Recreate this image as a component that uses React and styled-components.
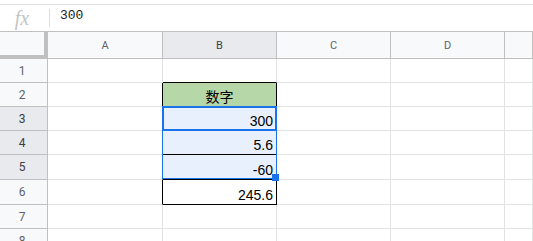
import React from 'react';
import styled, { createGlobalStyle } from 'styled-components';

const Global = createGlobalStyle`
  html, body { margin: 0; padding: 0; background: #fff; overflow: hidden; }
  * { box-sizing: border-box; }
`;

const Page = styled.div`
  width: 533px;
  height: 241px;
  overflow: hidden;
  display: flex;
  flex-direction: column;
  background: #fff;
`;

const FormulaBar = styled.div`
  margin-top: 4px;
  height: 27px;
  border-top: 1px solid #e1e1e1;
  display: flex;
  align-items: center;
  flex: none;
`;

const Fx = styled.span`
  width: 44px;
  text-align: center;
  font-family: "Liberation Serif", serif;
  font-style: italic;
  font-size: 20px;
  color: #c4c4c4;
  line-height: 20px;
  margin-top: -1px;
`;

const Divider = styled.span`
  width: 1px;
  height: 18px;
  margin-left: 5px;
  background: #dadce0;
`;

const FormulaValue = styled.span`
  margin-left: 10px;
  align-self: flex-start;
  margin-top: 3px;
  font-family: "Liberation Mono", "DejaVu Sans Mono", monospace;
  font-size: 13px;
  line-height: 15px;
  color: #202124;
`;

const Grid = styled.div`
  display: grid;
  flex: none;
  grid-template-columns: 48px 115px 114px 114px 114px 1fr;
  grid-template-rows: 27px 24px 24px 24px 24px 25px 25px 24px 24px;
  border-top: 1px solid #c0c0c0;
`;

const Corner = styled.div`
  grid-row: 1;
  grid-column: 1;
  background: #f8f9fa;
  border-right: 1px solid #c0c0c0;
  border-bottom: 1px solid #c0c0c0;
  box-shadow: inset -3px -3px 0 #c0c0c0;
`;

const HeaderBase = styled.div`
  grid-row: ${p => p.$r};
  grid-column: ${p => p.$c};
  display: flex;
  align-items: center;
  justify-content: center;
  background: ${p => (p.$sel ? '#e8eaed' : '#f8f9fa')};
  border-right: 1px solid #c0c0c0;
  border-bottom: 1px solid #c0c0c0;
  font-family: Roboto, "Liberation Sans", sans-serif;
  font-size: 11px;
  color: ${p => (p.$sel ? '#3c4043' : '#5f6368')};
`;

const ColHeader = styled(HeaderBase)``;

const RowHeader = styled(HeaderBase)`
  padding-right: 3px;
  font-size: 12px;
`;

const Cell = styled.div`
  grid-row: ${p => p.$r};
  grid-column: ${p => p.$c};
  display: flex;
  align-items: flex-end;
  justify-content: ${p => (p.$center ? 'center' : 'flex-end')};
  padding: 0 3px 1px 3px;
  background: ${p => p.$bg || '#fff'};
  border-right: 1px solid ${p => p.$rb || '#e2e3e3'};
  border-bottom: 1px solid ${p => p.$bb || '#e2e3e3'};
  font-family: "Liberation Sans", Arial, "Noto Sans CJK SC", sans-serif;
  font-size: 14px;
  line-height: 16px;
  color: #000;
  white-space: nowrap;
`;

const RangeSelection = styled.div`
  grid-row: ${p => p.$rows};
  grid-column: ${p => p.$c};
  margin: -1px 0 1px -1px;
  border: 1px solid #1a73e8;
  position: relative;
  pointer-events: none;
  z-index: 2;
`;

const ActiveCell = styled.div`
  grid-row: ${p => p.$r};
  grid-column: ${p => p.$c};
  margin: -1px 0 0 -1px;
  border: 2px solid #1a73e8;
  pointer-events: none;
  z-index: 3;
`;

const FillHandle = styled.span`
  position: absolute;
  right: -3px;
  bottom: -3px;
  width: 7px;
  height: 7px;
  background: #1a73e8;
`;

const COLS = ['A', 'B', 'C', 'D', ''];
const ROWS = [1, 2, 3, 4, 5, 6, 7, 8];
const SEL_COL = 'B';
const SEL_ROWS = [3, 4, 5];

const DATA = {
  B2: { text: '数字', center: true, bg: '#b6d7a8' },
  B3: { text: '300' },
  B4: { text: '5.6' },
  B5: { text: '-60' },
  B6: { text: '245.6' },
};

const inTable = (col, row) => col === 'B' && row >= 2 && row <= 6;

export default function App() {
  return (
    <Page>
      <Global />
      <FormulaBar>
        <Fx>fx</Fx>
        <Divider />
        <FormulaValue>300</FormulaValue>
      </FormulaBar>
      <Grid>
        <Corner />
        {COLS.map((c, i) => (
          <ColHeader key={'h' + i} $r={1} $c={i + 2} $sel={c === SEL_COL}>
            {c}
          </ColHeader>
        ))}
        {ROWS.map((r, ri) => (
          <React.Fragment key={r}>
            <RowHeader $r={ri + 2} $c={1} $sel={SEL_ROWS.includes(r)}>
              {r}
            </RowHeader>
            {COLS.map((c, ci) => {
              const key = c + r;
              const d = DATA[key] || {};
              const right = inTable(c, r) || inTable(COLS[ci + 1], r) ? '#000' : undefined;
              const bottom = inTable(c, r) || inTable(c, r + 1) ? '#000' : undefined;
              const selected = c === SEL_COL && SEL_ROWS.includes(r);
              return (
                <Cell
                  key={key}
                  $r={ri + 2}
                  $c={ci + 2}
                  $rb={right}
                  $bb={bottom}
                  $bg={selected ? '#e8f0fe' : d.bg}
                  $center={d.center}
                >
                  {d.text}
                </Cell>
              );
            })}
          </React.Fragment>
        ))}
        <RangeSelection $rows="4 / 7" $c={3}>
          <FillHandle />
        </RangeSelection>
        <ActiveCell $r={4} $c={3} />
      </Grid>
    </Page>
  );
}
